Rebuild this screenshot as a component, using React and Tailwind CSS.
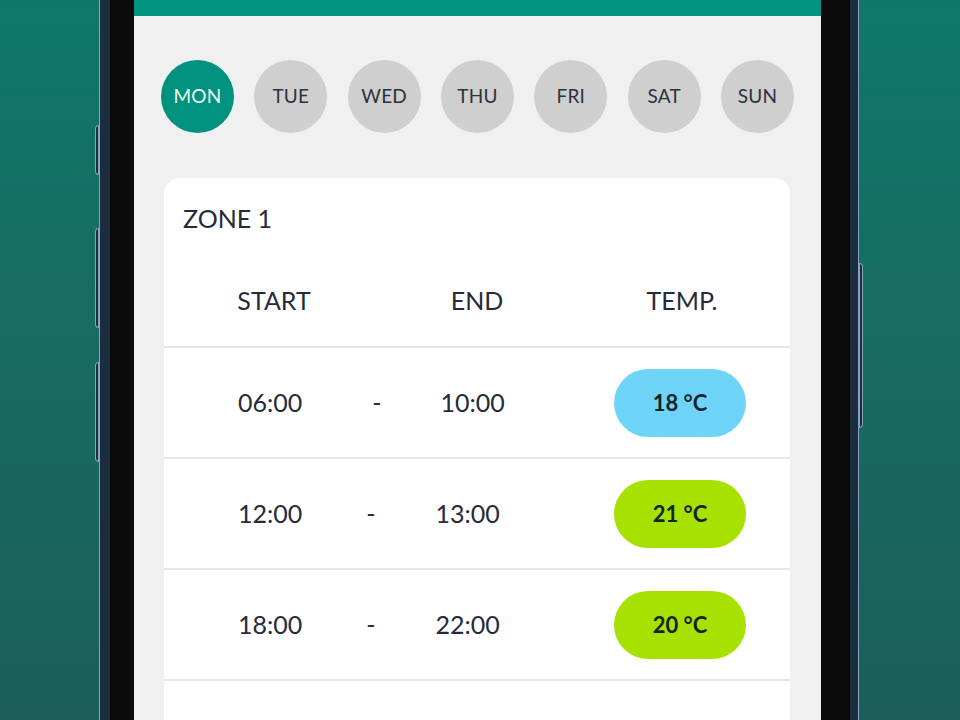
import React from "react";

const days = ["MON", "TUE", "WED", "THU", "FRI", "SAT", "SUN"];

const rows = [
  { start: "06:00", end: "10:00", temp: "18 °C", color: "bg-[#6dd4f8]", dash: "ml-[70px]", endm: "ml-[59px]" },
  { start: "12:00", end: "13:00", temp: "21 °C", color: "bg-[#a6e100]", dash: "ml-[64px]", endm: "ml-[60px]" },
  { start: "18:00", end: "22:00", temp: "20 °C", color: "bg-[#a6e100]", dash: "ml-[64px]", endm: "ml-[60px]" },
];

export default function App() {
  return (
    <div
      className="relative w-[960px] h-[720px] overflow-hidden bg-linear-to-b from-[#0f776a] to-[#1c5e5b] text-[#252b3a]"
      style={{ fontFamily: "Lato, 'Open Sans', sans-serif" }}
    >
      {/* phone */}
      <div className="relative ml-[99px] w-[760px] h-[720px] flex border-x border-[#86a5bc] bg-[#1b2d3e] pl-[10px] pr-[8px]">
        {/* side buttons */}
        <div className="absolute left-[-5px] top-[125px] w-[4px] h-[50px] rounded-l-sm bg-[#1b2d3e] border border-[#86a5bc]" />
        <div className="absolute left-[-5px] top-[228px] w-[4px] h-[100px] rounded-l-sm bg-[#1b2d3e] border border-[#86a5bc]" />
        <div className="absolute left-[-5px] top-[362px] w-[4px] h-[100px] rounded-l-sm bg-[#1b2d3e] border border-[#86a5bc]" />
        <div className="absolute right-[-5px] top-[263px] w-[4px] h-[165px] rounded-r-sm bg-[#1b2d3e] border border-[#86a5bc]" />

        <div className="flex-1 flex bg-[#0a0a0a] pl-[24px] pr-[27px]">
          {/* screen */}
          <div className="w-[687px] h-full bg-[#f0f0f0] flex flex-col">
            <div className="h-[16px] bg-[#00917f]" />
            <div className="mt-[44px] px-[27px] flex justify-between">
              {days.map((d, i) => (
                <div
                  key={d}
                  className={
                    i === 0
                      ? "w-[73px] h-[73px] rounded-full bg-[#00917f] text-[#e8f8f4] flex items-center justify-center text-[19px] tracking-[0.2px]"
                      : "w-[73px] h-[73px] rounded-full bg-[#cfcfcf] text-[#2b3240] flex items-center justify-center text-[19px] tracking-[0.2px]"
                  }
                >
                  {d}
                </div>
              ))}
            </div>

            <div className="mt-[45px] ml-[30px] w-[626px] flex-1 bg-white rounded-t-[16px]">
              <div className="pt-[25px] pl-[19px] h-[55px] leading-[30px] text-[25px]">ZONE 1</div>
              <div className="mt-[23px] h-[90px] grid grid-cols-[220px_186px_220px] items-center text-[25px]">
                <div className="text-center">START</div>
                <div className="text-center">END</div>
                <div className="text-center pl-[4px]">TEMP.</div>
              </div>
              {rows.map((r) => (
                <div
                  key={r.start}
                  className="border-t-2 border-[#e6e6e6] h-[111px] flex items-center pl-[74px] pr-[44px] text-[25px]"
                >
                  <span>{r.start}</span>
                  <span className={r.dash}>-</span>
                  <span className={r.endm}>{r.end}</span>
                  <div
                    className={`ml-auto w-[132px] h-[68px] rounded-full ${r.color} flex items-center justify-center font-bold text-[22px] text-[#15232b]`}
                  >
                    {r.temp}
                  </div>
                </div>
              ))}
              <div className="border-t-2 border-[#e6e6e6]" />
            </div>
          </div>
        </div>
      </div>
    </div>
  );
}
